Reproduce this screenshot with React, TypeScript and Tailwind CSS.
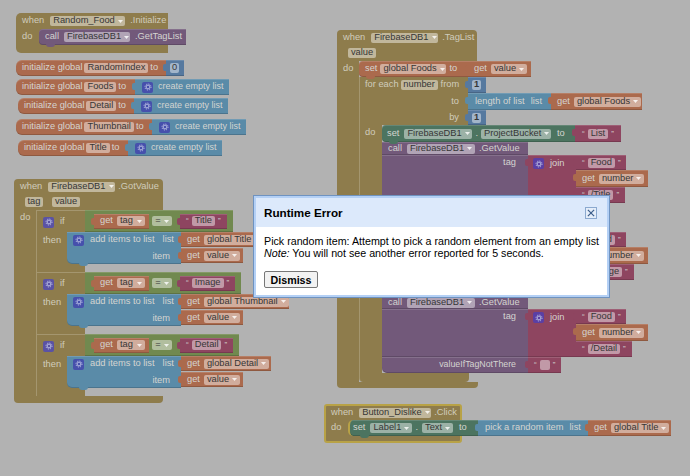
import type { ReactNode } from 'react';
import clsx from 'clsx';

const GOLD = 'bg-[#8e7c4c]';
const ORANGE = 'bg-[#ab6a4d]';
const BLUE = 'bg-[#5a8ba8]';
const NUM = 'bg-[#56799f]';
const PURPLE = 'bg-[#72597a]';
const PINK = 'bg-[#8e4560]';
const GREEN = 'bg-[#71894f]';
const TEAL = 'bg-[#4c7460]';
const EDGE = 'shadow-[inset_0_1px_0_rgba(255,255,255,0.14),inset_0_-1px_0_rgba(0,0,0,0.16)]';

function B({ tone, className, tab, children }: { tone: string; className?: string; tab?: boolean; children?: ReactNode }) {
  return (
    <div className={clsx('relative flex shrink-0 items-center whitespace-nowrap text-[#d4d4d0]', EDGE, tone, className)}>
      {tab && <i className="absolute -left-[3px] top-[4px] h-[7px] w-[3px] rounded-l-[2px] bg-inherit" />}
      {children}
    </div>
  );
}

function F({ children, dd = true, className }: { children?: ReactNode; dd?: boolean; className?: string }) {
  return (
    <span className={clsx('inline-flex h-[10px] shrink-0 items-center justify-between rounded-[2px] bg-white/45 px-[3px] text-[#363636]', className)}>
      {children}
      {dd && (
        <svg width="5" height="3" viewBox="0 0 5 3" className="ml-[3px] shrink-0 fill-white/80">
          <path d="M0 0h5L2.5 3z" />
        </svg>
      )}
    </span>
  );
}

function Gear({ className }: { className?: string }) {
  return (
    <span className={clsx('flex h-[11px] w-[11px] shrink-0 items-center justify-center rounded-[2px]', className ?? 'bg-[#4650ac]')}>
      <svg width="8" height="8" viewBox="0 0 10 10" fill="none" stroke="#c4c8e8">
        <circle cx="5" cy="5" r="2.4" strokeWidth="1.1" />
        <circle cx="5" cy="5" r="3.8" strokeWidth="1.1" strokeDasharray="1.4 1.6" />
      </svg>
    </span>
  );
}

function Str({ children, className }: { children?: ReactNode; className?: string }) {
  return (
    <B tone={PINK} tab className={clsx('h-[15px] pl-[6px]', className)}>
      <span className="text-[8px] leading-none">“</span>
      <F dd={false} className="ml-[3px] bg-white/40">{children}</F>
      <span className="ml-[3px] text-[8px] leading-none">”</span>
    </B>
  );
}

function Get({ name, className }: { name: string; className?: string }) {
  return (
    <B tone={ORANGE} tab className={clsx('h-[15px] pl-[6px] pr-[4px]', className)}>
      get
      <F className="ml-[4px] flex-1">{name}</F>
    </B>
  );
}

function Init({ pos, name, w, listW = 'w-[94px]' }: { pos: string; name: string; w: string; listW?: string }) {
  return (
    <div className={clsx('absolute flex', pos)}>
      <B tone={ORANGE} className={clsx('h-[16px] rounded-l-[6px] pl-[6px]', w)}>
        initialize global
        <F dd={false} className="ml-[2px] bg-white/25">{name}</F>
        <span className="ml-[2px]">to</span>
      </B>
      <B tone={BLUE} tab className={clsx('h-[16px] pl-[7px]', listW)}>
        <Gear />
        <span className="ml-[5px] text-[9px]">create empty list</span>
      </B>
    </div>
  );
}

function IfGroup({ label, strW, greenW, listName, listW }: { label: string; strW: string; greenW: string; listName: string; listW: string }) {
  return (
    <div className="flex h-[62px]">
      <div className={clsx('w-[49px] border-l border-t border-white/20', GOLD)}>
        <div className="flex h-[22px] items-center pl-[6px]">
          <Gear className="bg-[#5a52a4]" />
          <span className="ml-[6px]">if</span>
        </div>
        <div className="pl-[6px] leading-[14px]">then</div>
      </div>
      <div className="flex flex-col">
        <B tone={GREEN} className={clsx('h-[22px] pl-[9px]', greenW)}>
          <Get name="tag" className="w-[55px]" />
          <F className="ml-[3px] h-[10px] w-[20px] justify-center bg-white/40">=</F>
          <Str className={clsx('ml-[8px]', strW)}>{label}</Str>
        </B>
        <div className="flex">
          <B tone={BLUE} className="-ml-[18px] h-[32px] w-[114px] rounded-bl-[5px]">
            <div className="flex h-full w-full flex-col">
              <div className="flex h-[16px] items-center pl-[6px]">
                <Gear />
                <span className="ml-[6px]">add items to list</span>
                <span className="ml-[8px]">list</span>
              </div>
              <div className="h-[16px] pr-[11px] text-right leading-[16px]">item</div>
            </div>
            <i className="absolute -bottom-[2px] left-[12px] h-[3px] w-[9px] rounded-b-[3px] bg-inherit" />
          </B>
          <div className="flex flex-col gap-[1px]">
            <Get name={listName} className={listW} />
            <Get name="value" className="w-[62px]" />
          </div>
        </div>
      </div>
    </div>
  );
}

function GetValue({ end, endW }: { end: string; endW: string }) {
  return (
    <div className="flex flex-col">
      <B tone={PURPLE} className="h-[13px] w-[146px] pl-[6px]">
        call
        <F className="ml-[5px] w-[68px]">FirebaseDB1</F>
        <span className="ml-[4px]">.GetValue</span>
      </B>
      <div className="flex">
        <B tone={PURPLE} className="h-[48px] w-[146px] items-start justify-end pr-[12px] pt-[1px]">tag</B>
        <B tone={PINK} tab className="h-[48px] w-[48px] items-start pl-[5px] pt-[3px]">
          <Gear className="bg-[#5a3fa4]" />
          <span className="-mt-[1px] ml-[6px]">join</span>
        </B>
        <div className="flex flex-col">
          <Str className="w-[50px]">Food</Str>
          <Get name="number" className="h-[17px] w-[72px]" />
          <Str className={clsx('h-[16px]', endW)}>{end}</Str>
        </div>
      </div>
      <div className="flex">
        <B tone={PURPLE} className="h-[16px] w-[146px] justify-end rounded-bl-[5px] pr-[12px] text-[8.8px]">valueIfTagNotThere</B>
        <Str className="h-[16px] w-[33px]">
          <span className="inline-block w-[4px]" />
        </Str>
      </div>
    </div>
  );
}

export default function App() {
  return (
    <div className="relative h-[476px] w-[690px] overflow-hidden bg-[#b2b2b2] font-['Liberation_Sans',Arial,sans-serif] text-[9.3px]">
      {/* Random_Food.Initialize */}
      <div className={clsx('absolute left-[16px] top-[13px] h-[40px] w-[152px] rounded-l-[5px]', GOLD, 'text-[#d0ccbc]')}>
        <div className="flex h-[16px] items-center pl-[6px]">
          when
          <F className="ml-[6px] w-[75px]">Random_Food</F>
          <span className="ml-[5px]">.Initialize</span>
        </div>
        <div className="flex h-[16px] items-center">
          <span className="w-[23px] shrink-0 pl-[6px]">do</span>
          <B tone={PURPLE} className="h-[16px] w-[147px] rounded-l-[4px] pl-[6px]">
            call
            <F className="ml-[5px] w-[66px]">FirebaseDB1</F>
            <span className="ml-[5px]">.GetTagList</span>
            <i className="absolute -bottom-[2px] left-[7px] h-[3px] w-[9px] rounded-b-[3px] bg-inherit" />
          </B>
        </div>
      </div>

      {/* Globals */}
      <div className="absolute left-[16px] top-[60px] flex">
        <B tone={ORANGE} className="h-[16px] w-[150px] rounded-l-[6px] pl-[6px]">
          initialize global
          <F dd={false} className="ml-[2px] bg-white/25">RandomIndex</F>
          <span className="ml-[2px]">to</span>
        </B>
        <B tone={NUM} tab className="h-[16px] w-[18px] pl-[4px]">
          <F dd={false} className="w-[9px] justify-center">0</F>
        </B>
      </div>
      <Init pos="left-[16px] top-[79px]" name="Foods" w="w-[119px]" />
      <Init pos="left-[18px] top-[98px]" name="Detail" w="w-[116px]" />
      <Init pos="left-[16px] top-[119px]" name="Thumbnail" w="w-[136px]" />
      <Init pos="left-[18px] top-[140px]" name="Title" w="w-[110px]" />

      {/* FirebaseDB1.GotValue */}
      <div className="absolute left-[14px] top-[179px] flex flex-col text-[#d0ccbc]">
        <div className={clsx('flex h-[15px] w-[149px] items-center rounded-t-[4px] pl-[6px]', GOLD)}>
          when
          <F className="ml-[6px] w-[67px]">FirebaseDB1</F>
          <span className="ml-[3px]">.GotValue</span>
        </div>
        <div className={clsx('flex h-[16px] w-[149px] items-center gap-[9px] pl-[11px]', GOLD)}>
          <F dd={false} className="w-[18px] justify-center bg-[#b08a72] text-[#3c3c3c]">tag</F>
          <F dd={false} className="w-[28px] justify-center bg-[#b08a72] text-[#3c3c3c]">value</F>
        </div>
        <div className="flex">
          <div className={clsx('w-[22px] shrink-0 pl-[6px] pt-[1px]', GOLD)}>do</div>
          <div className="flex flex-col">
            <IfGroup label="Title" strW="w-[47px]" greenW="w-[148px]" listName="global Title" listW="w-[109px]" />
            <IfGroup label="Image" strW="w-[55px]" greenW="w-[156px]" listName="global Thumbnail" listW="w-[108px]" />
            <IfGroup label="Detail" strW="w-[53px]" greenW="w-[154px]" listName="global Detail" listW="w-[90px]" />
          </div>
        </div>
        <div className={clsx('h-[7px] w-[149px] rounded-b-[4px]', GOLD)} />
      </div>

      {/* FirebaseDB1.TagList */}
      <div className="absolute left-[337px] top-[30px] flex flex-col text-[#d0ccbc]">
        <div className={clsx('flex h-[15px] w-[140px] items-center rounded-t-[4px] pl-[6px]', GOLD)}>
          when
          <F className="ml-[6px] w-[67px]">FirebaseDB1</F>
          <span className="ml-[4px]">.TagList</span>
        </div>
        <div className={clsx('flex h-[16px] w-[140px] items-center pl-[11px]', GOLD)}>
          <F dd={false} className="w-[28px] justify-center bg-[#b08a72] text-[#3c3c3c]">value</F>
        </div>
        <div className="flex">
          <div className={clsx('w-[22px] shrink-0 pl-[6px] pt-[1px]', GOLD)}>do</div>
          <div className="flex flex-col">
            <div className="flex">
              <B tone={ORANGE} className="h-[16px] w-[109px] rounded-l-[4px] pl-[6px]">
                set
                <F className="ml-[3px] w-[66px]">global Foods</F>
                <span className="ml-[3px]">to</span>
                <i className="absolute -bottom-[2px] left-[7px] z-10 h-[3px] w-[9px] rounded-b-[3px] bg-inherit" />
              </B>
              <Get name="value" className="h-[16px] w-[63px]" />
            </div>
            <div className={clsx('flex w-[109px] flex-col border-l border-white/20', GOLD)}>
              <div className="flex h-[16px] items-center pl-[5px]">
                for each
                <F dd={false} className="ml-[2px] w-[37px] justify-center bg-[#b08a72] text-[#3c3c3c]">number</F>
                <span className="ml-[3px]">from</span>
              </div>
              <div className="h-[17px] pr-[9px] text-right leading-[17px]">to</div>
              <div className="h-[15px] pr-[9px] text-right leading-[15px]">by</div>
            </div>
            <div className="flex">
              <div className={clsx('w-[23px] shrink-0 border-l border-white/20 pl-[5px] pt-[1px]', GOLD)}>do</div>
              <div className="flex flex-col">
                <div className="flex">
                  <B tone={TEAL} className="h-[17px] w-[193px] rounded-l-[4px] pl-[5px]">
                    set
                    <F className="ml-[5px] w-[68px]">FirebaseDB1</F>
                    <span className="ml-[3px]">.</span>
                    <F className="ml-[3px] w-[70px]">ProjectBucket</F>
                    <span className="ml-[6px]">to</span>
                    <i className="absolute -bottom-[2px] left-[7px] z-10 h-[3px] w-[9px] rounded-b-[3px] bg-inherit" />
                  </B>
                  <Str className="h-[17px] w-[46px] pl-[7px]">List</Str>
                </div>
                <GetValue end="/Title" endW="w-[49px]" />
                <GetValue end="/Image" endW="w-[58px]" />
                <GetValue end="/Detail" endW="w-[56px]" />
              </div>
            </div>
            <div className={clsx('h-[9px] w-[110px] rounded-b-[4px] border-l border-white/20', GOLD)} />
          </div>
        </div>
        <div className={clsx('h-[6px] w-[141px] rounded-b-[4px]', GOLD)} />
      </div>

      {/* values hanging off the for each */}
      <div className="absolute left-[468px] top-[77px] flex flex-col">
        <B tone={NUM} tab className="h-[16px] w-[18px] pl-[4px]">
          <F dd={false} className="w-[9px] justify-center font-bold">1</F>
        </B>
        <div className="flex">
          <B tone={BLUE} tab className="h-[17px] w-[83px] pl-[7px]">
            length of list
            <span className="ml-[6px]">list</span>
          </B>
          <Get name="global Foods" className="h-[17px] w-[91px]" />
        </div>
        <B tone={NUM} tab className="h-[15px] w-[18px] pl-[4px]">
          <F dd={false} className="w-[9px] justify-center font-bold">1</F>
        </B>
      </div>

      {/* Button_Dislike.Click */}
      <div className={clsx('absolute left-[324px] top-[404px] h-[39px] w-[138px] rounded-[3px] border-2 border-[#b8a246] text-[#d0ccbc]', GOLD)}>
        <div className="flex h-[13px] items-center pl-[5px]">
          when
          <F className="ml-[6px] w-[72px]">Button_Dislike</F>
          <span className="ml-[3px]">.Click</span>
        </div>
        <div className="mt-[1px] flex h-[16px] items-center pl-[5px]">
          <span className="w-[17px] shrink-0">do</span>
          <B tone={TEAL} className="h-[16px] w-[130px] rounded-l-[5px] border-l-2 border-[#b8a246] pl-[3px]">
            set
            <F className="ml-[5px] w-[42px]">Label1</F>
            <span className="ml-[3px]">.</span>
            <F className="ml-[4px] w-[31px]">Text</F>
            <span className="ml-[6px]">to</span>
            <i className="absolute -bottom-[2px] left-[10px] h-[3px] w-[9px] rounded-b-[3px] bg-inherit" />
          </B>
          <B tone={BLUE} tab className="h-[16px] w-[110px] pl-[7px]">
            pick a random item
            <span className="ml-[6px]">list</span>
          </B>
          <Get name="global Title" className="h-[16px] w-[83px]" />
        </div>
      </div>

      {/* Dialog */}
      <div className="absolute left-[253px] top-[195px] flex h-[103px] w-[357px] flex-col border border-[#6f93c0] bg-white text-[10.7px] text-black">
        <div className="flex h-full flex-col border-2 border-[#b4d0f5]">
          <div className="flex h-[29px] shrink-0 items-center justify-between bg-[#dce9fb] pl-[8px] pr-[10px]">
            <span className="text-[11.7px] font-bold">Runtime Error</span>
            <button className="flex h-[12px] w-[12px] items-center justify-center border border-[#8ba9cf] bg-[#e4edf9]">
              <svg width="8" height="8" viewBox="0 0 9 9" stroke="#3d5f8c" strokeWidth="1.4">
                <path d="M1 1l7 7M8 1L1 8" />
              </svg>
            </button>
          </div>
          <div className="pl-[8px] pt-[8px] leading-[12px]">
            <p className="whitespace-nowrap">Pick random item: Attempt to pick a random element from an empty list</p>
            <p className="whitespace-nowrap"><em>Note:</em> You will not see another error reported for 5 seconds.</p>
            <button className="mt-[12px] flex h-[17px] w-[54px] items-center justify-center rounded-[2px] border border-[#777] bg-[#f2f2f2] text-[10.7px] font-bold">Dismiss</button>
          </div>
        </div>
      </div>
    </div>
  );
}
